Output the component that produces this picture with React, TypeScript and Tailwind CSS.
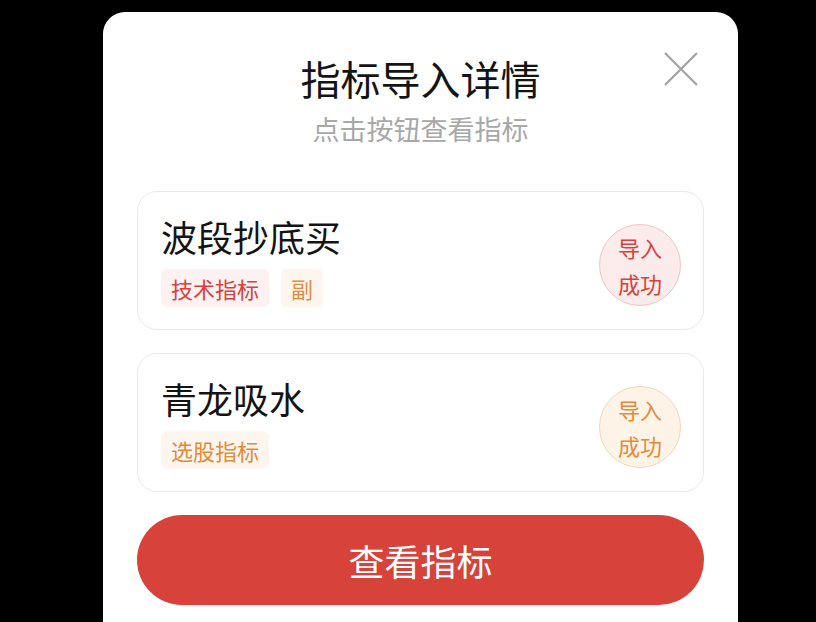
const font = { fontFamily: '"Noto Sans CJK SC", "Noto Sans", sans-serif' };

type Tag = { label: string; tone: "red" | "orange" };

function Badge({ tone }: { tone: "red" | "orange" }) {
    const cls =
        tone === "red"
            ? "bg-[#fcebeb] border-[#efc4c4] text-[#d6423b]"
            : "bg-[#fdf3e7] border-[#f2d7b7] text-[#e38a3c]";
    return (
        <div className={`mb-px flex size-[82px] shrink-0 flex-col items-center justify-center rounded-full border text-[22px] leading-[36px] ${cls}`}>
            <span>导入</span>
            <span>成功</span>
        </div>
    );
}

function IndicatorCard({ name, tags, tone }: { name: string; tags: Tag[]; tone: "red" | "orange" }) {
    return (
        <div className="flex h-[139px] items-end justify-between rounded-[20px] border border-[#e9e9e9] bg-white pl-[23px] pr-[22px] pb-[22px] pt-[24px]">
            <div className="flex h-full flex-col justify-between">
                <div className="text-[36px] leading-[40px] text-[#141414]">{name}</div>
                <div className="flex gap-3">
                    {tags.map((t) => (
                        <span
                            key={t.label}
                            className={`flex h-[38px] items-center rounded-md px-[10px] text-[22px] ${
                                t.tone === "red" ? "bg-[#fdf2f1] text-[#d6423b]" : "bg-[#fdf6ee] text-[#e38a3c]"
                            }`}
                        >
                            {t.label}
                        </span>
                    ))}
                </div>
            </div>
            <Badge tone={tone} />
        </div>
    );
}

export default function App() {
    return (
        <div className="flex h-[622px] w-[816px] overflow-hidden bg-black pl-[103px] pt-3" style={font}>
            <div className="relative flex w-[635px] flex-col rounded-t-[22px] bg-white px-[34px] pt-[43px]">
                <button className="absolute right-[40px] top-[40px] flex size-[34px] items-center justify-center text-[#a3a3a3]">
                    <svg viewBox="0 0 34 34" className="size-[34px]" fill="none" stroke="currentColor" strokeWidth="2.2">
                        <path d="M1 1 L33 33 M33 1 L1 33" />
                    </svg>
                </button>
                <h1 className="text-center text-[40px] leading-[46px] text-[#141414]">指标导入详情</h1>
                <p className="mt-[11px] text-center text-[27px] leading-[34px] text-[#a8a8a8]">点击按钮查看指标</p>

                <div className="mt-[45px] flex flex-col gap-[23px]">
                    <IndicatorCard
                        name="波段抄底买"
                        tone="red"
                        tags={[
                            { label: "技术指标", tone: "red" },
                            { label: "副", tone: "orange" },
                        ]}
                    />
                    <IndicatorCard name="青龙吸水" tone="orange" tags={[{ label: "选股指标", tone: "orange" }]} />
                </div>

                <button className="mt-[23px] flex h-[90px] w-full items-center justify-center rounded-full bg-[#d7423a] text-[36px] text-white">
                    查看指标
                </button>
            </div>
        </div>
    );
}
